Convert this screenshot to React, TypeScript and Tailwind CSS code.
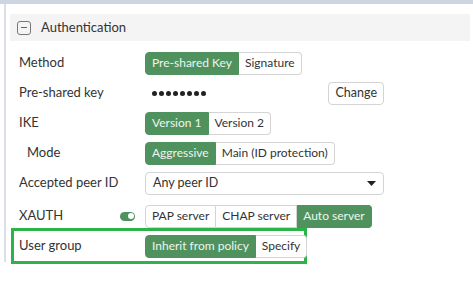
type Opt = { label: string; active?: boolean }

function Segmented({ options }: { options: Opt[] }) {
  return (
    <div className="flex h-[23px] shrink-0">
      {options.map((o, i) => (
        <button
          key={o.label}
          className={`px-[6px] text-[12px] leading-none whitespace-nowrap border ${
            o.active
              ? 'bg-[#4f925e] border-[#4f925e] text-[#eef5ee]'
              : 'bg-white border-[#d4d4d4] text-[#333]'
          } ${i === 0 ? 'rounded-l-[4px]' : 'border-l-0'} ${
            i === options.length - 1 ? 'rounded-r-[4px]' : ''
          }`}
        >
          {o.label}
        </button>
      ))}
    </div>
  )
}

function Row({
  label,
  indent,
  children,
  h = 'h-[30px]',
  extra,
}: {
  label: string
  indent?: boolean
  children: React.ReactNode
  h?: string
  extra?: React.ReactNode
}) {
  return (
    <div className={`flex items-center ${h}`}>
      <div className={`w-[126px] shrink-0 flex items-center justify-between text-[13px] text-[#333] ${indent ? 'pl-[8px]' : ''}`}>
        <span>{label}</span>
        {extra}
      </div>
      {children}
    </div>
  )
}

export default function App() {
  return (
    <div
      className="w-[473px] h-[282px] bg-white overflow-hidden"
      style={{ fontFamily: 'Lato, "Open Sans", sans-serif' }}
    >
      <div className="h-[4px] bg-[#cdd5e2]" />
      <div className="ml-[4px] h-[258px] border-l-2 border-[#dbe0e8] pt-[7px] pl-[4px]">
        {/* Header */}
        <div className="mt-[3px] w-[460px] h-[27px] bg-[#f4f4f4] flex items-center pl-[7px] gap-[10px]">
          <div className="w-[14px] h-[14px] border border-[#777] rounded-[3px] flex items-center justify-center">
            <div className="w-[6px] h-[1.5px] bg-[#666]" />
          </div>
          <span className="text-[13px] text-[#333]">Authentication</span>
        </div>

        <div className="pl-[9px] pt-[7px]">
          <Row label="Method">
            <Segmented options={[{ label: 'Pre-shared Key', active: true }, { label: 'Signature' }]} />
          </Row>
          <Row label="Pre-shared key">
            <div className="flex items-center w-[239px] justify-between">
              <div className="pl-[7px] flex gap-[2px]">
                {Array.from({ length: 8 }, (_, i) => (
                  <div key={i} className="w-[5px] h-[5px] rounded-full bg-[#222]" />
                ))}
              </div>
              <button className="h-[23px] px-[6px] text-[12.5px] leading-none text-[#333] border border-[#d4d4d4] rounded-[4px] bg-white">
                Change
              </button>
            </div>
          </Row>
          <Row label="IKE">
            <Segmented options={[{ label: 'Version 1', active: true }, { label: 'Version 2' }]} />
          </Row>
          <Row label="Mode" indent>
            <Segmented options={[{ label: 'Aggressive', active: true }, { label: 'Main (ID protection)' }]} />
          </Row>
          <Row label="Accepted peer ID">
            <div className="w-[239px] h-[23px] border border-[#d4d4d4] rounded-[4px] flex items-center justify-between px-[7px] text-[12.5px] text-[#333]">
              <span>Any peer ID</span>
              <svg width="9" height="5" viewBox="0 0 9 5">
                <path d="M0 0h9L4.5 5z" fill="#222" />
              </svg>
            </div>
          </Row>
          <Row
            label="XAUTH"
            h="h-[30px] pt-[6px]"
            extra={
              <div className="mr-[10px] w-[15px] h-[9px] rounded-full bg-[#4f925e] flex items-center justify-end pr-[1.5px]">
                <div className="w-[6px] h-[6px] rounded-full bg-white" />
              </div>
            }
          >
            <Segmented
              options={[{ label: 'PAP server' }, { label: 'CHAP server' }, { label: 'Auto server', active: true }]}
            />
          </Row>
        </div>
        <div className="ml-[1px] w-[296px] h-[36px] border-[3px] border-[#2db34a] flex items-center pl-[5px]">
          <div className="w-[126px] shrink-0 text-[13px] text-[#333]">User group</div>
          <Segmented options={[{ label: 'Inherit from policy', active: true }, { label: 'Specify' }]} />
        </div>
      </div>
    </div>
  )
}
